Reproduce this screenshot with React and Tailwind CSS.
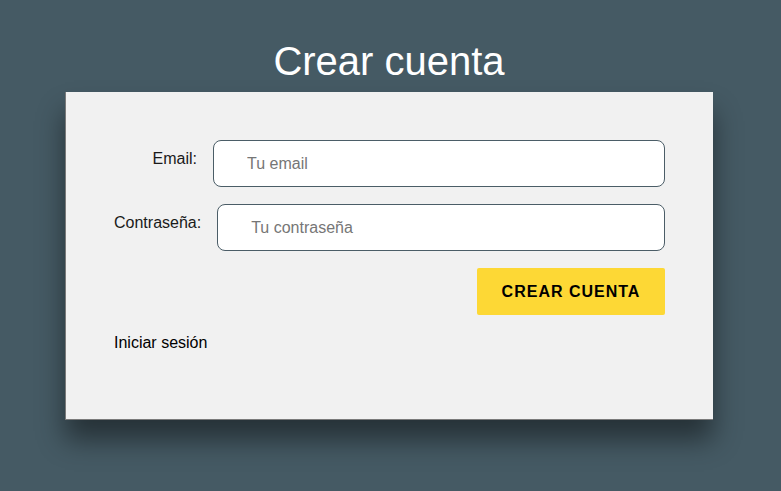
export default function App() {
  return (
    <div
      className="min-h-screen bg-[#455a64] pt-[38px]"
      style={{ fontFamily: '"Liberation Sans", Arial, sans-serif' }}
    >
      <div className="ml-[65px] w-[648px]">
        <h1 className="text-center text-[40px] leading-[46px] text-white mb-[8px]">
          Crear cuenta
        </h1>

        {/* Tarjeta del formulario */}
        <div className="h-[328px] bg-[#f1f1f1] border-l border-b border-[#7a7a7a] px-[48px] pt-[48px] shadow-[0_20px_26px_rgba(0,0,0,0.45)]">
          <form className="flex flex-col gap-[17px]" onSubmit={(e) => e.preventDefault()}>
            <div className="flex justify-end items-start gap-[16px]">
              <label className="mt-[7px] text-base leading-[24px] text-[#1a1a1a]">Email:</label>
              <input
                type="email"
                placeholder="Tu email"
                className="w-[452px] h-[47px] bg-white border border-[#4b5d67] rounded-[8px] pl-[33px] text-base text-black placeholder:text-[#767676] outline-none"
              />
            </div>
            <div className="flex justify-end items-start gap-[16px]">
              <label className="mt-[7px] text-base leading-[24px] text-[#1a1a1a]">Contraseña:</label>
              <input
                type="password"
                placeholder="Tu contraseña"
                className="w-[449px] h-[47px] bg-white border border-[#4b5d67] rounded-[8px] pl-[33px] text-base text-black placeholder:text-[#767676] outline-none"
              />
            </div>
            <div className="flex justify-end">
              <button
                type="submit"
                className="w-[188px] h-[47px] bg-[#fdd835] rounded-[2px] text-base font-bold tracking-[1px] text-black uppercase"
              >
                Crear cuenta
              </button>
            </div>
          </form>
          <p className="mt-[16px] text-base leading-[24px] text-black">Iniciar sesión</p>
        </div>
      </div>
    </div>
  );
}
